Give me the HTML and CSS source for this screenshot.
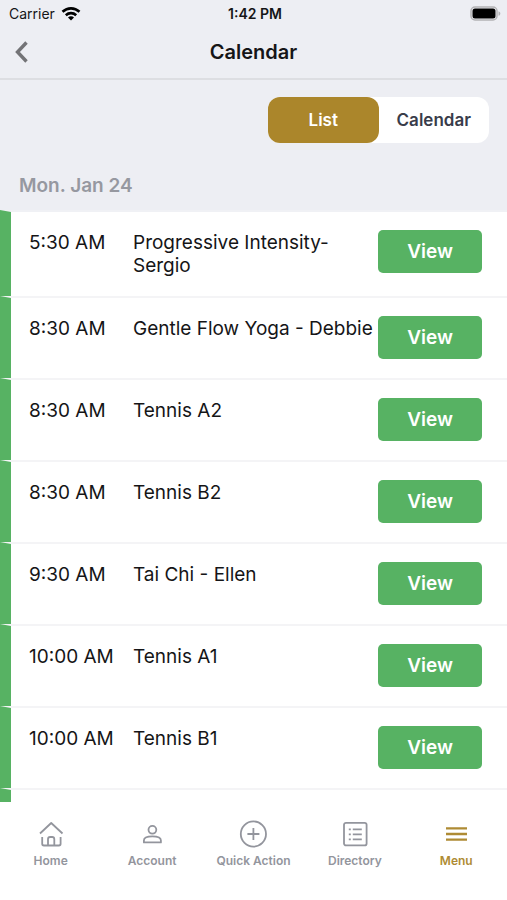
FILE: index.html
```html
<!DOCTYPE html>
<html lang="en">
<head>
<meta charset="utf-8">
<meta name="viewport" content="width=device-width, initial-scale=1">
<title>Calendar</title>
<link rel="stylesheet" href="styles.css">
</head>
<body>
<div class="status">
  <div class="carrier">Carrier
    <svg width="20" height="14" viewBox="0 0 20 14" fill="none" stroke="#000" stroke-width="2.600"><path d="M1.500 4.800C6.500 .2 13.500 .2 18.500 4.800M4.800 8.200c3-2.800 7.400-2.800 10.400 0"/><path d="M10 13.600 7 10.600a4.200 4.200 0 0 1 6 0z" fill="#000" stroke="none"/></svg>
  </div>
  <div class="clock">1:42 PM</div>
  <svg class="battery" width="31" height="15" viewBox="0 0 31 15"><rect x="1" y="1" width="26" height="13" rx="4" fill="#eeeef2" stroke="#b2b2b5" stroke-width="1.500"/><rect x="2.500" y="2.500" width="23" height="10" rx="2.500" fill="#000"/><path d="M28.500 5.200c2.400.8 2.400 3.800 0 4.600z" fill="#b2b2b5"/></svg>
</div>
<header class="header">
  <button class="back" aria-label="Back"><svg width="14" height="22" viewBox="0 0 14 22" fill="none" stroke="#737376" stroke-width="3.400"><path d="M12.500 1.500 3.500 11l9 9.500"/></svg></button>
  <h1>Calendar</h1>
</header>
<main class="main">
  <div class="switch-row">
    <div class="switch"><button class="on">List</button><button>Calendar</button></div>
  </div>
  <h2>Mon. Jan 24</h2>
  <ul class="events">
    <li><time>5:30 AM</time><span>Progressive Intensity-<br>Sergio</span><button>View</button></li>
    <li><time>8:30 AM</time><span>Gentle Flow Yoga - Debbie</span><button>View</button></li>
    <li><time>8:30 AM</time><span>Tennis A2</span><button>View</button></li>
    <li><time>8:30 AM</time><span>Tennis B2</span><button>View</button></li>
    <li><time>9:30 AM</time><span>Tai Chi - Ellen</span><button>View</button></li>
    <li><time>10:00 AM</time><span>Tennis A1</span><button>View</button></li>
    <li><time>10:00 AM</time><span>Tennis B1</span><button>View</button></li>
    <li></li>
  </ul>
</main>
<nav class="tabs">
  <a href="#home"><svg width="28" height="28" viewBox="0 0 28 28"><path d="M3 13.500 14.200 3 25.500 13.500M5.200 17v6.800q0 1.700 1.700 1.700h15q1.700 0 1.700-1.700V17M11 25.500v-6.300q0-2.200 2.200-2.200h1.900q2.200 0 2.200 2.200v6.300"/></svg>Home</a>
  <a href="#account"><svg width="28" height="28" viewBox="0 0 28 28"><circle cx="14.400" cy="9.800" r="3.900"/><path d="M5.900 22.400v-2c0-5.300 17-5.300 17 0v2z"/></svg>Account</a>
  <a href="#quick"><svg width="28" height="28" viewBox="0 0 28 28"><circle cx="14.400" cy="14" r="12.600"/><path d="M14.400 8v12M8.400 14h12"/></svg>Quick Action</a>
  <a href="#directory"><svg width="28" height="28" viewBox="0 0 28 28"><rect x="3" y="2.800" width="22.600" height="22.600" rx="2"/><path d="M7.800 9.300h2M11.800 9.300h9M7.800 14.300h2M11.800 14.300h9M7.800 19.300h2M11.800 19.300h9"/></svg>Directory</a>
  <a href="#menu" class="active"><svg width="28" height="28" viewBox="0 0 28 28"><path d="M4 8.300h21M4 14h21M4 19.700h21" stroke-width="2.300"/></svg>Menu</a>
</nav>
</body>
</html>
```
FILE: styles.css
```css
* { box-sizing: border-box; }
body {
  margin: 0;
  height: 100vh;
  display: flex;
  flex-direction: column;
  background: #edeef3;
  color: #151517;
  font-family: Inter, "Liberation Sans", sans-serif;
}
button {
  border: 0;
  padding: 0;
  background: none;
  font-family: inherit;
}
h1, h2, ul { margin: 0; padding: 0; }

.status {
  display: grid;
  grid-template-columns: 1fr auto 1fr;
  align-items: center;
  height: 27px;
  padding: 0 6px 0 9px;
  font-size: 14px;
}
.carrier { display: flex; align-items: center; gap: 6px; }
.clock { font-weight: 600; }
.battery { justify-self: end; }

.header {
  display: grid;
  grid-template-columns: 48px 1fr 48px;
  align-items: center;
  height: 53px;
  padding-bottom: 1px;
  border-bottom: 2px solid #dddee2;
}
.back { display: flex; padding-left: 14px; }
h1 {
  font-size: 20px;
  font-weight: 600;
  text-align: center;
}

.main {
  flex: 1;
  min-height: 0;
  overflow: hidden;
}
.switch-row {
  display: flex;
  justify-content: flex-end;
  padding: 17px 18px 0;
}
.switch {
  display: grid;
  grid-template-columns: 1fr 1fr;
  width: 221px;
  border-radius: 12px;
  background: #fff;
}
.switch button {
  height: 46px;
  border-radius: 12px;
  color: #393c4a;
  font-size: 17px;
  font-weight: 600;
}
.switch .on { background: #ab862b; color: #fff; }
h2 {
  padding: 30px 19px 12px;
  color: #9698a0;
  font-size: 19px;
  font-weight: 600;
  line-height: 25px;
}

.events { list-style: none; background: #fff; }
.events li {
  display: grid;
  grid-template-columns: 104px 1fr 104px;
  align-items: start;
  min-height: 82px;
  padding: 18px 25px 15px 18px;
  border-top: 2px solid #f4f4f6;
  border-left: 11px solid #57b263;
  font-size: 19px;
  line-height: 23px;
}
.events li:first-child { min-height: 86px; border-top-color: #f0f1f5; }
.events time, .events span { padding-top: 1px; white-space: nowrap; }
.events button {
  height: 43px;
  border-radius: 5px;
  background: #57b263;
  color: #fff;
  font-size: 19px;
  font-weight: 600;
}

.tabs {
  display: grid;
  grid-template-columns: repeat(5, 1fr);
  height: 98px;
  padding-top: 18px;
  background: #fff;
}
.tabs a {
  display: flex;
  flex-direction: column;
  align-items: center;
  gap: 5px;
  color: #93959d;
  font-size: 12px;
  font-weight: 600;
  line-height: 16px;
  text-decoration: none;
}
.tabs svg {
  fill: none;
  stroke: currentColor;
  stroke-width: 1.8;
  stroke-linejoin: round;
}
.tabs .active { color: #ae8b34; }
```
